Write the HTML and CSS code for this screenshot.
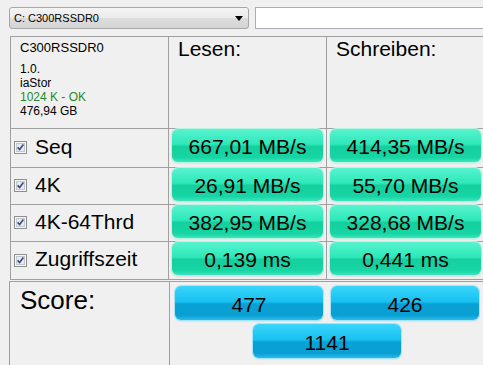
FILE: index.html
```html
<!DOCTYPE html>
<html>
<head>
    <title>AS SSD Benchmark</title>
    <link rel="stylesheet" href="styles.css">
</head>
<body>
    <div class="toolbar">
        <div class="combo">
            <span>C: C300RSSDR0</span>
            <svg class="arrow" width="8" height="5" viewBox="0 0 8 5"><path d="M0 0 H8 L4 5 Z" fill="#000"/></svg>
        </div>
        <div class="textbox"></div>
    </div>

    <div class="panel">
        <div class="cell info">
            <div class="drive">C300RSSDR0</div>
            <div class="line">1.0.</div>
            <div class="line">iaStor</div>
            <div class="line ok">1024 K - OK</div>
            <div class="line">476,94 GB</div>
        </div>
        <div class="cell head">Lesen:</div>
        <div class="cell head">Schreiben:</div>

        <div class="cell label">
            <svg class="check" width="13" height="13" viewBox="0 0 13 13"><rect x=".5" y=".5" width="12" height="12" fill="#f6f6f6" stroke="#8f8f8f"/><rect x="2.5" y="2.5" width="8" height="8" fill="#e6e9f0" stroke="#c3c7d0"/><path d="M3.6 6.4 L5.6 8.6 L9.4 3.6" fill="none" stroke="#3b4a7a" stroke-width="1.6"/></svg>
            <span>Seq</span>
        </div>
        <div class="cell value"><div class="btn green">667,01 MB/s</div></div>
        <div class="cell value"><div class="btn green">414,35 MB/s</div></div>

        <div class="cell label">
            <svg class="check" width="13" height="13" viewBox="0 0 13 13"><rect x=".5" y=".5" width="12" height="12" fill="#f6f6f6" stroke="#8f8f8f"/><rect x="2.5" y="2.5" width="8" height="8" fill="#e6e9f0" stroke="#c3c7d0"/><path d="M3.6 6.4 L5.6 8.6 L9.4 3.6" fill="none" stroke="#3b4a7a" stroke-width="1.6"/></svg>
            <span>4K</span>
        </div>
        <div class="cell value"><div class="btn green">26,91 MB/s</div></div>
        <div class="cell value"><div class="btn green">55,70 MB/s</div></div>

        <div class="cell label">
            <svg class="check" width="13" height="13" viewBox="0 0 13 13"><rect x=".5" y=".5" width="12" height="12" fill="#f6f6f6" stroke="#8f8f8f"/><rect x="2.5" y="2.5" width="8" height="8" fill="#e6e9f0" stroke="#c3c7d0"/><path d="M3.6 6.4 L5.6 8.6 L9.4 3.6" fill="none" stroke="#3b4a7a" stroke-width="1.6"/></svg>
            <span>4K-64Thrd</span>
        </div>
        <div class="cell value"><div class="btn green">382,95 MB/s</div></div>
        <div class="cell value"><div class="btn green">328,68 MB/s</div></div>

        <div class="cell label">
            <svg class="check" width="13" height="13" viewBox="0 0 13 13"><rect x=".5" y=".5" width="12" height="12" fill="#f6f6f6" stroke="#8f8f8f"/><rect x="2.5" y="2.5" width="8" height="8" fill="#e6e9f0" stroke="#c3c7d0"/><path d="M3.6 6.4 L5.6 8.6 L9.4 3.6" fill="none" stroke="#3b4a7a" stroke-width="1.6"/></svg>
            <span>Zugriffszeit</span>
        </div>
        <div class="cell value"><div class="btn green">0,139 ms</div></div>
        <div class="cell value"><div class="btn green">0,441 ms</div></div>
    </div>

    <div class="score">
        <div class="score-label">Score:</div>
        <div class="score-values">
            <div class="btn blue">477</div>
            <div class="btn blue">426</div>
            <div class="btn blue">1141</div>
        </div>
    </div>
</body>
</html>
```

FILE: styles.css
```css
body {
    margin: 0;
    background-color: #f0f0f0;
    font-family: "Liberation Sans", Arial, sans-serif;
    color: #000;
    overflow: hidden;
}

.toolbar {
    display: flex;
    gap: 6px;
    padding: 7px 0 0 9px;
}

.combo {
    box-sizing: border-box;
    width: 240px;
    height: 22px;
    border: 1px solid #a7a7a7;
    border-radius: 3px;
    background: linear-gradient(to bottom, #f4f4f4 0%, #ebebeb 50%, #dddddd 51%, #d4d4d4 100%);
    display: flex;
    align-items: center;
    justify-content: space-between;
    padding: 0 5px 0 4px;
    font-size: 11px;
}

.textbox {
    flex: 1;
    height: 22px;
    box-sizing: border-box;
    border: 1px solid #abadb3;
    background-color: #fff;
    margin-right: -4px;
}

.panel {
    display: grid;
    grid-template-columns: 158px 158px 170px;
    grid-template-rows: 92px 39px 37px 37px 38px;
    margin: 7px 0 0 10px;
    border-top: 1px solid #a0a0a0;
    border-left: 1px solid #a0a0a0;
}

.cell {
    box-sizing: border-box;
    border-right: 1px solid #a0a0a0;
    border-bottom: 1px solid #a0a0a0;
}

.info {
    padding: 3px 0 0 9px;
}

.drive {
    font-size: 13px;
    line-height: 15px;
    margin-bottom: 7px;
}

.line {
    font-size: 12px;
    line-height: 14px;
}

.line.ok {
    color: #1f8a2a;
}

.head {
    font-size: 21px;
    line-height: 24px;
    padding-left: 9px;
}

.label {
    display: flex;
    align-items: center;
    gap: 8px;
    padding: 0 0 3px 3px;
    font-size: 21px;
}

.check {
    flex: none;
    margin-top: 2px;
}

.value {
    padding: 0 0 0 3px;
}

.btn {
    box-sizing: border-box;
    display: flex;
    align-items: center;
    justify-content: center;
    width: 151px;
    height: 33px;
    padding-top: 3px;
    border-radius: 6px;
    font-size: 21px;
}

.btn.green {
    background: linear-gradient(to bottom, #58f3cf 0%, #2de8b9 46%, #14cf9e 53%, #17d5a4 86%, #3ae6bb 100%);
    box-shadow: 0 0 0 1px #b8f4e2, 0 1px 2px rgba(0, 0, 0, 0.18);
}

.btn.blue {
    width: 148px;
    height: 34px;
    background: linear-gradient(to bottom, #3ad5fb 0%, #17c1f0 46%, #08a1d5 53%, #0b9fd2 86%, #28bbe8 100%);
    box-shadow: 0 0 0 1px #a6e4f8, 0 1px 2px rgba(0, 0, 0, 0.18);
}

.score {
    display: grid;
    grid-template-columns: 160px 1fr;
    height: 100px;
    margin: 1px 0 0 9px;
    border-top: 1px solid #a0a0a0;
    border-left: 1px solid #a0a0a0;
}

.score-label {
    border-right: 1px solid #a0a0a0;
    font-size: 26px;
    line-height: 30px;
    padding: 3px 0 0 10px;
}

.score-values {
    display: flex;
    flex-wrap: wrap;
    justify-content: center;
    align-content: flex-start;
    gap: 4px 8px;
    width: 304px;
    padding: 4px 0 0 5px;
}
```
